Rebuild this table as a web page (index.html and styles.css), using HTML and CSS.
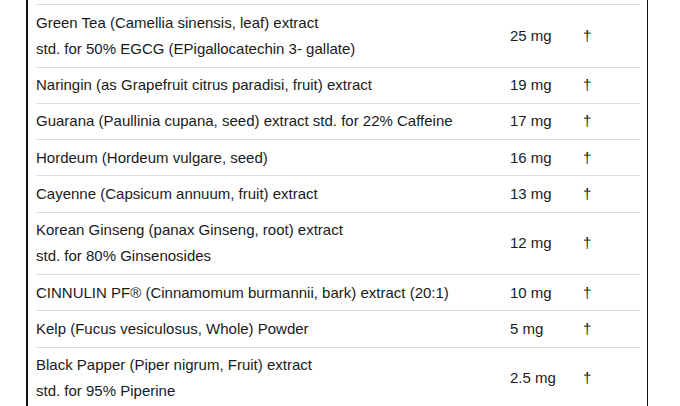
FILE: index.html
```html
<!DOCTYPE html>
<html>
<head>
<meta charset="utf-8">
<link rel="stylesheet" href="styles.css">
</head>
<body>
<div class="panel">
  <table class="facts">
    <colgroup>
      <col class="c-name">
      <col class="c-amt">
      <col class="c-dv">
    </colgroup>
    <tbody>
      <tr><td>Green Tea (Camellia sinensis, leaf) extract<br>std. for 50% EGCG (EPigallocatechin 3- gallate)</td><td class="amt">25 mg</td><td class="dv">†</td></tr>
      <tr><td>Naringin (as Grapefruit citrus paradisi, fruit) extract</td><td class="amt">19 mg</td><td class="dv">†</td></tr>
      <tr><td>Guarana (Paullinia cupana, seed) extract std. for 22% Caffeine</td><td class="amt">17 mg</td><td class="dv">†</td></tr>
      <tr><td>Hordeum (Hordeum vulgare, seed)</td><td class="amt">16 mg</td><td class="dv">†</td></tr>
      <tr><td>Cayenne (Capsicum annuum, fruit) extract</td><td class="amt">13 mg</td><td class="dv">†</td></tr>
      <tr><td>Korean Ginseng (panax Ginseng, root) extract<br>std. for 80% Ginsenosides</td><td class="amt">12 mg</td><td class="dv">†</td></tr>
      <tr><td>CINNULIN PF® (Cinnamomum burmannii, bark) extract (20:1)</td><td class="amt">10 mg</td><td class="dv">†</td></tr>
      <tr><td>Kelp (Fucus vesiculosus, Whole) Powder</td><td class="amt">5 mg</td><td class="dv">†</td></tr>
      <tr><td>Black Papper (Piper nigrum, Fruit) extract<br>std. for 95% Piperine</td><td class="amt">2.5 mg</td><td class="dv">†</td></tr>
    </tbody>
  </table>
</div>
</body>
</html>
```
FILE: styles.css
```css
html, body {
  margin: 0;
  padding: 0;
  background: #fff;
  height: 100%;
  overflow: hidden;
}
body {
  font-family: "Liberation Sans", Arial, sans-serif;
  font-size: 15px;
  color: #1a1a1a;
}
.panel {
  margin-left: 26px;
  width: 622px;
  min-height: 100%;
  border-left: 2px solid #111;
  border-right: 1px solid #111;
  padding: 4px 10px 0 8px;
  box-sizing: border-box;
}
.facts {
  width: 604px;
  border-collapse: collapse;
  table-layout: fixed;
}
.c-name { width: 474px; }
.c-amt { width: 73px; }
.c-dv { width: 57px; }
.facts td {
  border-top: 1px solid #ddd;
  padding: 4.5px 0;
  line-height: 26.25px;
  vertical-align: middle;
}
```
